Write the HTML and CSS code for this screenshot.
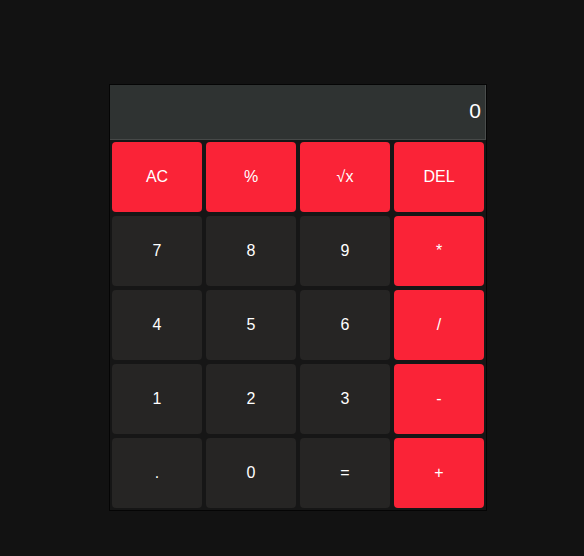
FILE: index.html
```html
<!DOCTYPE html>
<html>
<head>
<meta charset="utf-8">
<link rel="stylesheet" href="styles.css">
</head>
<body>
<div class="calc">
  <div class="display">0</div>
  <div class="keys">
    <button class="key red">AC</button>
    <button class="key red">%</button>
    <button class="key red">√x</button>
    <button class="key red">DEL</button>
    <button class="key">7</button>
    <button class="key">8</button>
    <button class="key">9</button>
    <button class="key red">*</button>
    <button class="key">4</button>
    <button class="key">5</button>
    <button class="key">6</button>
    <button class="key red">/</button>
    <button class="key">1</button>
    <button class="key">2</button>
    <button class="key">3</button>
    <button class="key red">-</button>
    <button class="key">.</button>
    <button class="key">0</button>
    <button class="key">=</button>
    <button class="key red">+</button>
  </div>
</div>
</body>
</html>
```
FILE: styles.css
```css
html, body {
  margin: 0;
  padding: 0;
  background: #121212;
  height: 100%;
}
body {
  padding-top: 84px;
  padding-left: 109px;
  box-sizing: border-box;
  font-family: "Liberation Sans", Arial, sans-serif;
}
.calc {
  width: 376px;
  border: 1px solid #050505;
  background: #161616;
}
.display {
  height: 55px;
  box-sizing: border-box;
  background: #2f3332;
  border-right: 1px solid #4a4d4c;
  border-bottom: 1px solid #464948;
  color: #ffffff;
  font-size: 21px;
  text-align: right;
  padding-right: 4px;
  line-height: 52px;
}
.keys {
  display: grid;
  grid-template-columns: repeat(4, 90px);
  grid-auto-rows: 70px;
  gap: 4px;
  padding: 2px;
}
.key {
  border: none;
  border-radius: 4px;
  background: #262524;
  color: #ffffff;
  font-family: "Liberation Sans", Arial, sans-serif;
  font-size: 16px;
  padding: 0;
}
.key.red {
  background: #fa2337;
}
```
